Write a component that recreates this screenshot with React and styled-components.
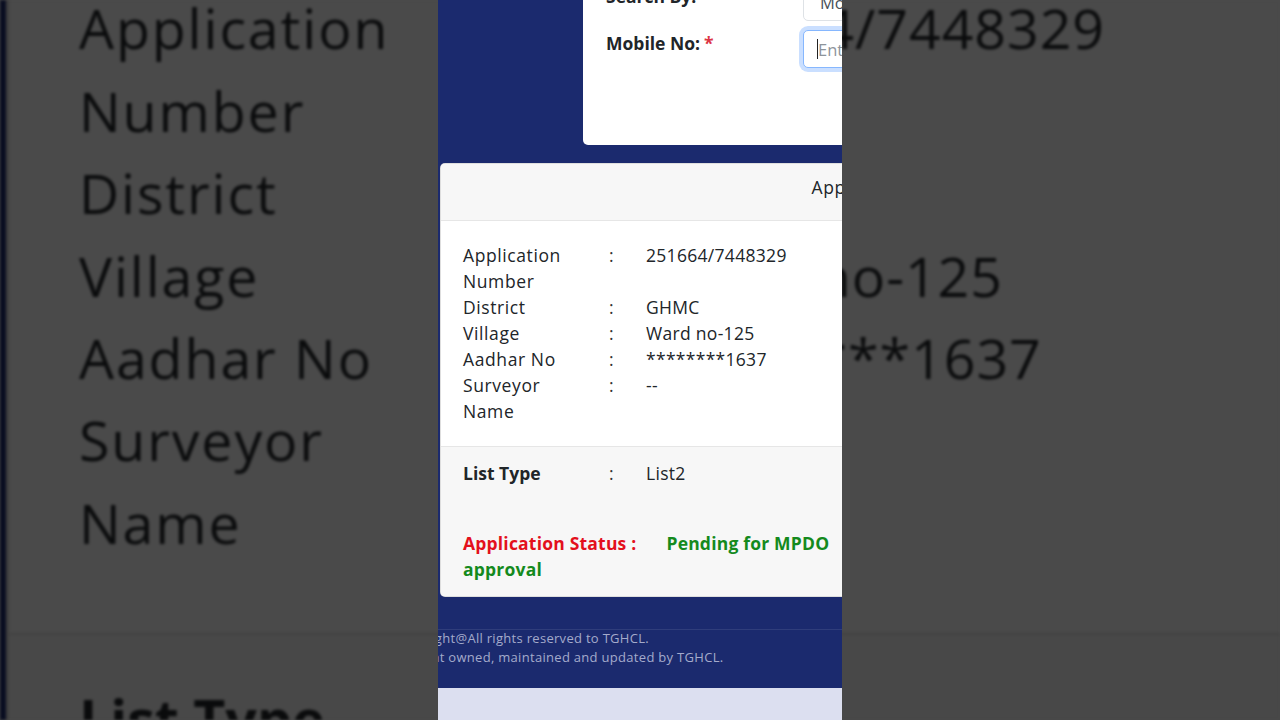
import React from 'react';
import styled, { createGlobalStyle } from 'styled-components';

const Global = createGlobalStyle`
  html, body { margin: 0; padding: 0; width: 1280px; height: 720px; overflow: hidden; background: #4a4a4a; }
  #root { width: 1280px; height: 720px; }
  * { box-sizing: border-box; }
`;

const Stage = styled.div`
  position: relative;
  width: 1280px;
  height: 720px;
  overflow: hidden;
  display: flex;
  justify-content: center;
  background: #4a4a4a;
  font-family: "Open Sans", "Noto Sans", sans-serif;
  color: #212529;
`;

const Backdrop = styled.div`
  position: absolute;
  inset: 0;
  overflow: hidden;
  display: flex;
  justify-content: center;
  align-items: center;
  filter: brightness(0.29) blur(1.4px);
  pointer-events: none;
`;

const Zoom = styled.div`
  flex: none;
  width: 404px;
  height: 720px;
  overflow: hidden;
  transform: scale(3.17);
  transform-origin: center center;
  background: #dcdff0;
`;

const Column = styled.div`
  position: relative;
  z-index: 1;
  flex: none;
  width: 404px;
  height: 720px;
  overflow: hidden;
  background: #dcdff0;
`;

const Main = styled.main`
  background: #1b2a6e;
  display: flex;
  flex-direction: column;
  align-items: flex-start;
  padding-bottom: 21px;
`;

const FormCard = styled.section`
  flex: none;
  width: 600px;
  margin: -37px 0 0 145px;
  padding: 20px 23px 77px;
  background: #ffffff;
  border-radius: 5px;
  display: grid;
  grid-template-columns: 197px 1fr;
  row-gap: 9px;
  align-items: start;
`;

const FormLabel = styled.label`
  padding-top: 1px;
  font-size: 17.5px;
  line-height: 24px;
  font-weight: 700;
  letter-spacing: 0;
  color: #212529;
`;

const Required = styled.span`
  color: #dc3545;
  margin-left: 4px;
`;

const SelectBox = styled.div`
  width: 380px;
  height: 38px;
  padding: 0 16px;
  border: 1px solid #dee2e6;
  border-radius: 5px;
  display: flex;
  align-items: center;
  font-size: 16.5px;
  color: #495057;
`;

const InputWrap = styled.div`
  position: relative;
  width: 380px;
  height: 38px;
`;

const TextInput = styled.input`
  width: 100%;
  height: 100%;
  padding: 0 14px;
  border: 1px solid #86b7fe;
  border-radius: 5px;
  box-shadow: 0 0 0 4px rgba(13, 110, 253, 0.22);
  outline: none;
  font-family: inherit;
  font-size: 16.5px;
  color: #212529;
  background: #fff;
  &::placeholder { color: #8d949b; }
`;

const Caret = styled.span`
  position: absolute;
  left: 14px;
  top: 9px;
  width: 1px;
  height: 20px;
  background: #222;
`;

const DetailsCard = styled.section`
  flex: none;
  width: 902px;
  margin: 18px 0 0 2px;
  background: #ffffff;
  border: 1px solid rgba(0, 0, 0, 0.13);
  border-radius: 5px;
  overflow: hidden;
`;

const CardHeader = styled.header`
  height: 57px;
  padding-top: 11px;
  padding-left: 4px;
  background: #f7f7f7;
  border-bottom: 1px solid #e6e6e6;
  text-align: center;
  font-size: 17.5px;
  line-height: 24px;
  letter-spacing: 0.6px;
`;

const CardBody = styled.div`
  padding: 21px 22px 22px;
  border-bottom: 1px solid #e6e6e6;
`;

const InfoGrid = styled.dl`
  margin: 0;
  display: grid;
  grid-template-columns: 146px 37px 1fr;
  font-size: 17.5px;
  line-height: 26px;
`;

const Term = styled.dt`
  padding-right: 26px;
  font-weight: ${p => (p.$bold ? 700 : 400)};
  letter-spacing: ${p => (p.$bold ? '0' : '0.6px')};
`;

const Colon = styled.span`
  color: #333;
`;

const Value = styled.dd`
  margin: 0;
  letter-spacing: 0.3px;
`;

const CardFooter = styled.div`
  padding: 13px 22px 14px;
  background: #f7f7f7;
`;

const StatusLine = styled.p`
  margin: 44px 0 0;
  max-width: 430px;
  font-size: 17.5px;
  line-height: 26px;
  font-weight: 700;
  letter-spacing: 0.2px;
`;

const StatusLabel = styled.span`
  color: #e3101c;
`;

const StatusValue = styled.span`
  color: #148a1d;
  margin-left: 30px;
`;

const Footer = styled.footer`
  align-self: stretch;
  margin-top: 32px;
  border-top: 1px solid rgba(255, 255, 255, 0.09);
`;

const FooterText = styled.p`
  margin: -1px 0 0 -44px;
  font-size: 13px;
  line-height: 19px;
  letter-spacing: 0.3px;
  color: #a4aacb;
  white-space: nowrap;
  & + & { margin-top: 0; }
`;

const rows = [
  ['Application Number', '251664/7448329'],
  ['District', 'GHMC'],
  ['Village', 'Ward no-125'],
  ['Aadhar No', '********1637'],
  ['Surveyor Name', '--'],
];

function PageContent({ copy }) {
  return (
    <Main>
      <FormCard>
        <FormLabel>Search By:</FormLabel>
        <SelectBox>Mobile No</SelectBox>
        <FormLabel>
          Mobile No:<Required>*</Required>
        </FormLabel>
        <InputWrap>
          <TextInput
            readOnly
            tabIndex={-1}
            placeholder="Enter Mobile Number"
            aria-label={copy ? undefined : 'Mobile No'}
          />
          <Caret />
        </InputWrap>
      </FormCard>

      <DetailsCard>
        <CardHeader>Application Details</CardHeader>
        <CardBody>
          <InfoGrid>
            {rows.map(([k, v]) => (
              <React.Fragment key={k}>
                <Term>{k}</Term>
                <Colon>:</Colon>
                <Value>{v}</Value>
              </React.Fragment>
            ))}
          </InfoGrid>
        </CardBody>
        <CardFooter>
          <InfoGrid>
            <Term $bold>List Type</Term>
            <Colon>:</Colon>
            <Value>List2</Value>
          </InfoGrid>
          <StatusLine>
            <StatusLabel>Application Status :</StatusLabel>
            <StatusValue>Pending for MPDO approval</StatusValue>
          </StatusLine>
        </CardFooter>
      </DetailsCard>

      <Footer>
        <FooterText>Copyright@All rights reserved to TGHCL.</FooterText>
        <FooterText>Content owned, maintained and updated by TGHCL.</FooterText>
      </Footer>
    </Main>
  );
}

export default function App() {
  return (
    <>
      <Global />
      <Stage>
        <Backdrop aria-hidden="true">
          <Zoom>
            <PageContent copy />
          </Zoom>
        </Backdrop>
        <Column>
          <PageContent />
        </Column>
      </Stage>
    </>
  );
}
